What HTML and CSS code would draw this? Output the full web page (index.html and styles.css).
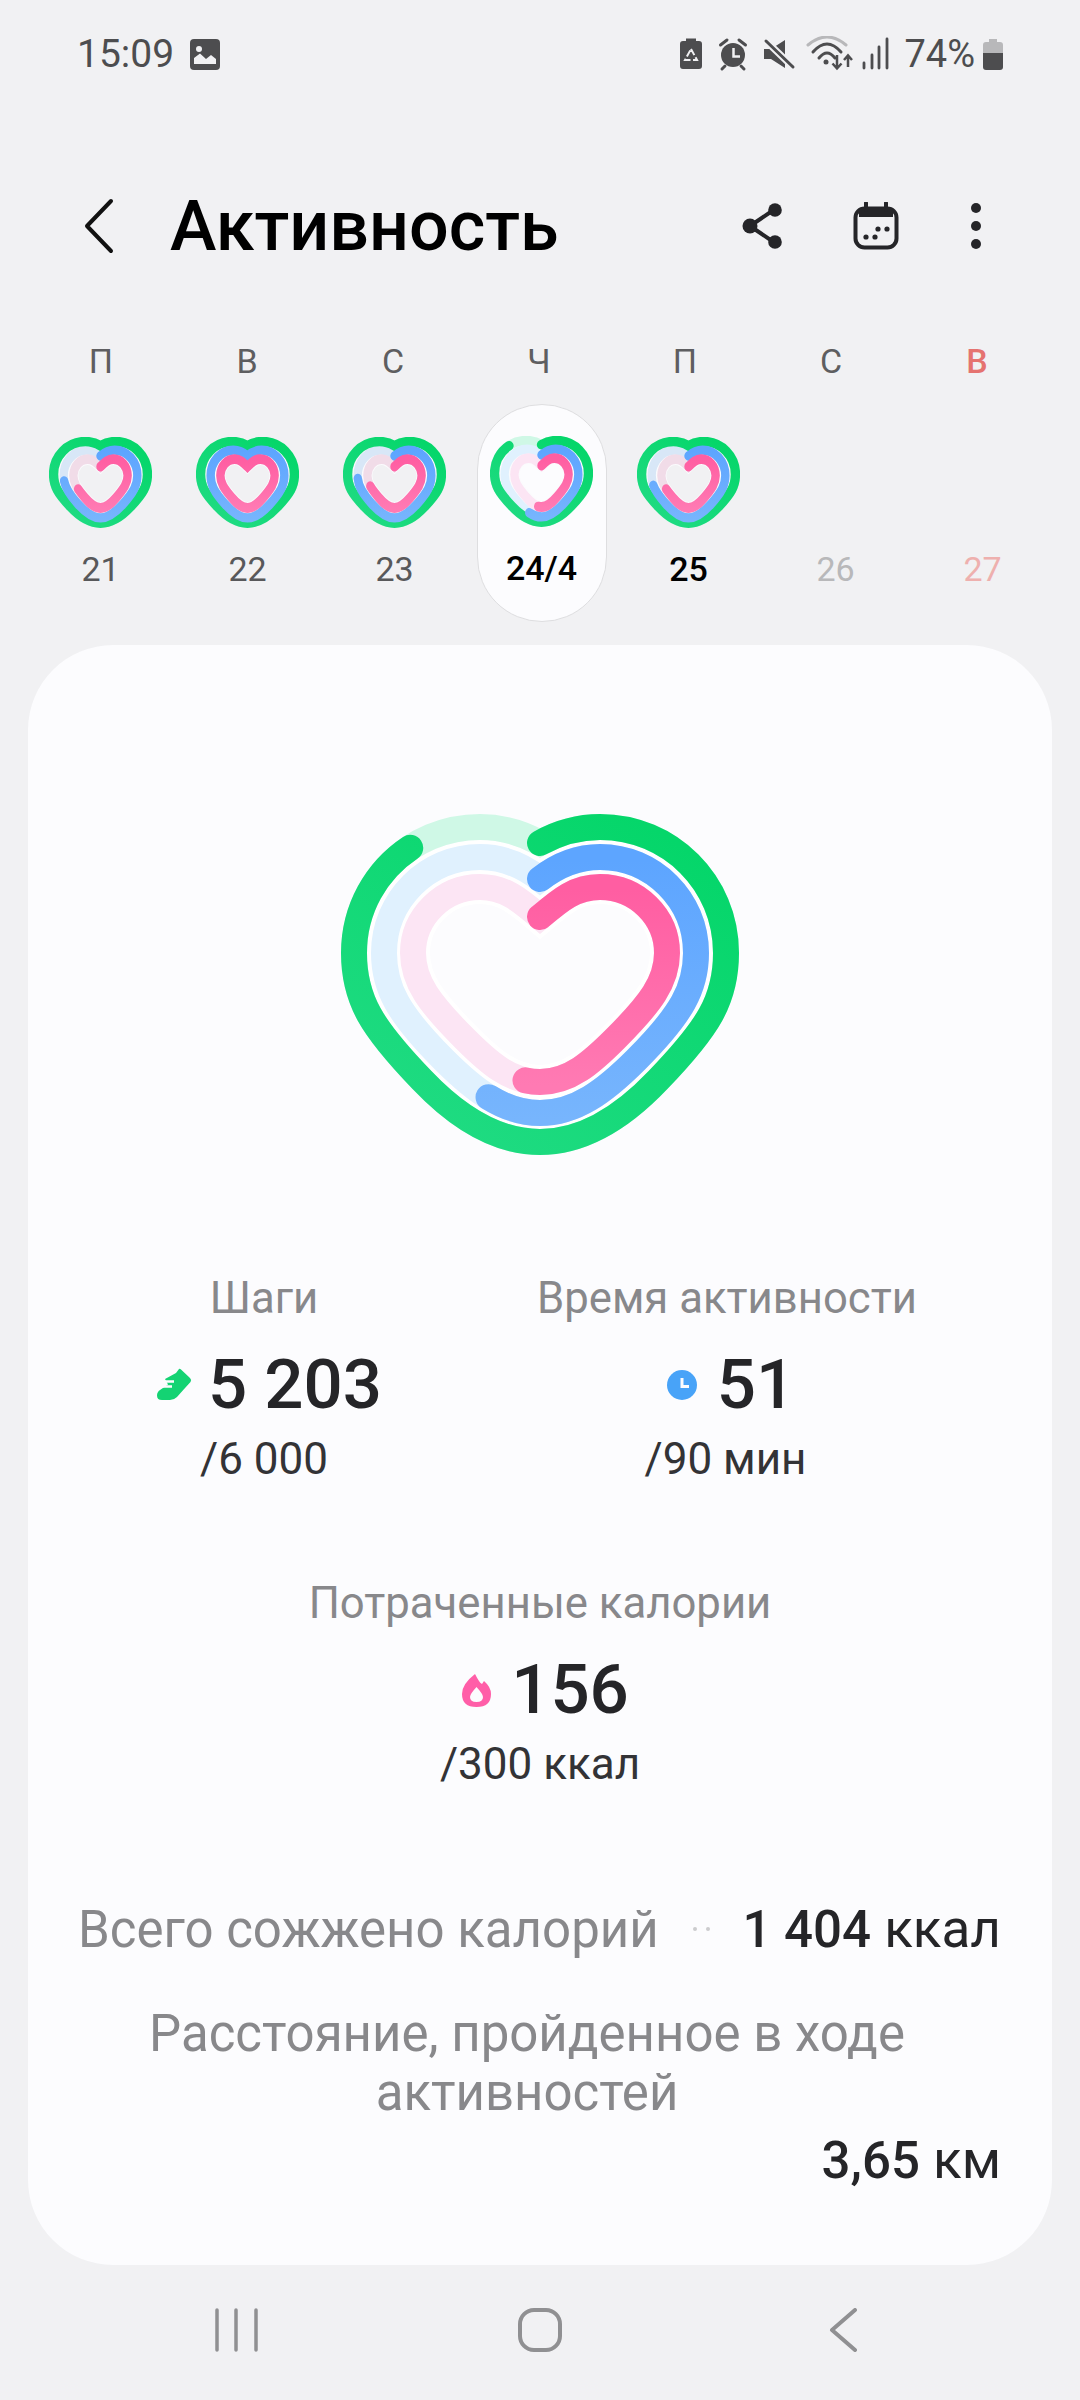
FILE: index.html
```html
<!DOCTYPE html>
<html lang="ru">
<head>
    <meta charset="UTF-8">
    <meta name="viewport" content="width=device-width, initial-scale=1.0">
    <title>Активность</title>
    <link rel="stylesheet" href="styles.css">
</head>
<body>
    <!-- Shared heart rings, reused by the week strip and the main card -->
    <svg class="svg-defs" aria-hidden="true">
        <defs>
            <linearGradient id="grad-green" gradientUnits="userSpaceOnUse" x1="100" y1="30" x2="-100" y2="350">
                <stop offset="0" stop-color="#05d66a"/>
                <stop offset="1" stop-color="#1fdb82"/>
            </linearGradient>
            <linearGradient id="grad-blue" gradientUnits="userSpaceOnUse" x1="0" y1="70" x2="0" y2="330">
                <stop offset="0" stop-color="#5da5ff"/>
                <stop offset="1" stop-color="#77b5fd"/>
            </linearGradient>
            <linearGradient id="grad-pink" gradientUnits="userSpaceOnUse" x1="0" y1="100" x2="0" y2="295">
                <stop offset="0" stop-color="#ff5ea2"/>
                <stop offset="1" stop-color="#ff7ab3"/>
            </linearGradient>
            <path id="ring-green" pathLength="100" d="M0 53C18 43 38 37 60 37C130 37 186 93 186 163C186 210 168 238 118 290C80 330 42 352 0 352C-42 352 -80 330 -118 290C-168 238 -186 210 -186 163C-186 93 -130 37 -60 37C-38 37 -18 43 0 53Z"/>
            <path id="ring-blue" pathLength="100" d="M0 89C18 75 38 67 60 67C113 67 156 110 156 163C156 198 142 224 96 270C65 301 36 323 0 323C-36 323 -65 301 -96 270C-142 224 -156 198 -156 163C-156 110 -113 67 -60 67C-38 67 -18 75 0 89Z"/>
            <path id="ring-pink" pathLength="100" d="M0 127C20 110 35 97 60 97C97 97 127 127 127 163C127 192 110 214 75 249C52 272 30 292 0 292C-30 292 -52 272 -75 249C-110 214 -127 192 -127 163C-127 127 -97 97 -60 97C-35 97 -20 110 0 127Z"/>
            <g id="heart-tracks">
                <use href="#ring-blue" class="blue casing"/>
                <use href="#ring-pink" class="pink casing"/>
                <use href="#ring-green" class="green track-green"/>
                <use href="#ring-blue" class="blue track-blue"/>
                <use href="#ring-pink" class="pink track-pink"/>
            </g>
        </defs>
    </svg>

    <div class="status-bar">
        <span class="status-time">15:09</span>
        <svg class="status-image" viewBox="190 39 30 31">
            <rect x="190" y="39" width="30" height="31" rx="4" fill="#4d4d4f"/>
            <circle cx="199" cy="49" r="3" fill="#f1f1f3"/>
            <path d="M194 64V58L200 53.500L206 59L211 55L216 59V64Z" fill="#f1f1f3"/>
        </svg>
        <div class="status-right">
            <svg class="status-icons" viewBox="680 36 209 36">
                <path d="M686 38.500H696V41H699Q702 41 702 44V66Q702 69 699 69H683Q680 69 680 66V44Q680 41 683 41H686Z" fill="#4d4d4f"/>
                <path d="M691 49L697 60H685Z" fill="none" stroke="#f1f1f3" stroke-width="2" stroke-dasharray="7 2.500"/>
                <circle cx="733" cy="55" r="12" fill="#4d4d4f"/>
                <path d="M733.500 48V56.500H740" fill="none" stroke="#f1f1f3" stroke-width="2.500"/>
                <path d="M720.500 45L727 40M745.500 45L739 40M725 66L722 69M741 66L744 69" fill="none" stroke="#4d4d4f" stroke-width="3" stroke-linecap="round"/>
                <path d="M764 49H771L785 40V68L771 59H764Z" fill="#4d4d4f"/>
                <path d="M766 41L793 67" fill="none" stroke="#f1f1f3" stroke-width="7"/>
                <path d="M766 41L793 67" fill="none" stroke="#4d4d4f" stroke-width="3" stroke-linecap="round"/>
                <path d="M808 45Q827 29 846 45" fill="none" stroke="#b8b8ba" stroke-width="3" stroke-linecap="round"/>
                <path d="M813 52Q827 36 841 52M819 58Q827 48 835 58" fill="none" stroke="#4d4d4f" stroke-width="3" stroke-linecap="round"/>
                <circle cx="826" cy="62" r="2.500" fill="#4d4d4f"/>
                <path d="M837 55V68M832.500 63.500L837 68.500L841.500 63.500M848 67V56M844 60L848 55.500L852 60" fill="none" stroke="#4d4d4f" stroke-width="2.500"/>
                <path d="M864 63V68M872 55V68M879 47V68M887 39V68" fill="none" stroke="#4d4d4f" stroke-width="2.800" stroke-linecap="round"/>
            </svg>
            <span class="status-battery">74%</span>
            <svg class="status-battery-icon" viewBox="0 0 20 31">
                <path d="M6 0H14V3H17Q20 3 20 6V14H0V6Q0 3 3 3H6Z" fill="#b8b8ba"/>
                <path d="M0 14H20V28Q20 31 17 31H3Q0 31 0 28Z" fill="#4d4d4f"/>
            </svg>
        </div>
    </div>

    <header class="app-header">
        <svg class="back-icon" viewBox="0 0 30 56">
            <path d="M27 3L3 28L27 53" fill="none" stroke="#111" stroke-width="4" stroke-linecap="round" stroke-linejoin="round"/>
        </svg>
        <h1 class="app-title">Активность</h1>
        <div class="app-actions">
            <svg class="share-icon" viewBox="0 0 40 46">
                <path d="M8 23L33 6M8 23L33 40" fill="none" stroke="#252528" stroke-width="4"/>
                <circle cx="8" cy="23" r="7.500" fill="#252528"/>
                <circle cx="33" cy="7" r="6.800" fill="#252528"/>
                <circle cx="33" cy="39" r="6.800" fill="#252528"/>
            </svg>
            <svg class="calendar-icon" viewBox="0 0 46 48">
                <rect x="2.500" y="6.500" width="41" height="39" rx="9" fill="none" stroke="#252528" stroke-width="4"/>
                <path d="M6 8H40V15H6Z" fill="#252528"/>
                <path d="M13 1V8M33 1V8" stroke="#252528" stroke-width="4" stroke-linecap="round"/>
                <circle cx="13" cy="35" r="2.600" fill="#252528"/>
                <circle cx="22" cy="35" r="2.600" fill="#252528"/>
                <circle cx="25" cy="27" r="2.600" fill="#252528"/>
                <circle cx="34" cy="27" r="2.600" fill="#252528"/>
            </svg>
            <svg class="more-icon" viewBox="0 0 12 48">
                <circle cx="6" cy="6" r="5" fill="#252528"/>
                <circle cx="6" cy="24" r="5" fill="#252528"/>
                <circle cx="6" cy="42" r="5" fill="#252528"/>
            </svg>
        </div>
    </header>

    <div class="week-letters">
        <span>П</span>
        <span>В</span>
        <span>С</span>
        <span>Ч</span>
        <span>П</span>
        <span>С</span>
        <span class="sunday">В</span>
    </div>

    <div class="week-days">
        <div class="day">
            <svg class="heart heart-small" viewBox="-200 24 400 342" preserveAspectRatio="none">
                <use href="#heart-tracks"/>
                <use href="#ring-green" class="green progress" stroke="url(#grad-green)"/>
                <use href="#ring-blue" class="blue progress" stroke="url(#grad-blue)" stroke-dasharray="74 100"/>
                <use href="#ring-pink" class="pink progress" stroke="url(#grad-pink)" stroke-dasharray="68 100"/>
            </svg>
            <span class="day-number">21</span>
        </div>
        <div class="day">
            <svg class="heart heart-small" viewBox="-200 24 400 342" preserveAspectRatio="none">
                <use href="#heart-tracks"/>
                <use href="#ring-green" class="green progress" stroke="url(#grad-green)"/>
                <use href="#ring-blue" class="blue progress" stroke="url(#grad-blue)"/>
                <use href="#ring-pink" class="pink progress" stroke="url(#grad-pink)"/>
            </svg>
            <span class="day-number">22</span>
        </div>
        <div class="day">
            <svg class="heart heart-small" viewBox="-200 24 400 342" preserveAspectRatio="none">
                <use href="#heart-tracks"/>
                <use href="#ring-green" class="green progress" stroke="url(#grad-green)"/>
                <use href="#ring-blue" class="blue progress" stroke="url(#grad-blue)" stroke-dasharray="75 100"/>
                <use href="#ring-pink" class="pink progress" stroke="url(#grad-pink)" stroke-dasharray="70 100"/>
            </svg>
            <span class="day-number">23</span>
        </div>
        <div class="day day-selected">
            <svg class="heart heart-small" viewBox="-200 24 400 342" preserveAspectRatio="none">
                <use href="#heart-tracks"/>
                <use href="#ring-green" class="green progress" stroke="url(#grad-green)" stroke-dasharray="87.500 100"/>
                <use href="#ring-blue" class="blue progress" stroke="url(#grad-blue)" stroke-dasharray="56 100"/>
                <use href="#ring-pink" class="pink progress" stroke="url(#grad-pink)" stroke-dasharray="52 100"/>
            </svg>
            <span class="day-number day-strong">24/4</span>
        </div>
        <div class="day">
            <svg class="heart heart-small" viewBox="-200 24 400 342" preserveAspectRatio="none">
                <use href="#heart-tracks"/>
                <use href="#ring-green" class="green progress" stroke="url(#grad-green)"/>
                <use href="#ring-blue" class="blue progress" stroke="url(#grad-blue)" stroke-dasharray="72 100"/>
                <use href="#ring-pink" class="pink progress" stroke="url(#grad-pink)" stroke-dasharray="68 100"/>
            </svg>
            <span class="day-number day-strong">25</span>
        </div>
        <div class="day">
            <span class="day-number day-future">26</span>
        </div>
        <div class="day">
            <span class="day-number day-future-sunday">27</span>
        </div>
    </div>

    <main class="card">
        <svg class="heart heart-big" viewBox="-200 24 400 342">
            <use href="#heart-tracks"/>
            <use href="#ring-green" class="green progress" stroke="url(#grad-green)" stroke-dasharray="87.500 100"/>
            <use href="#ring-blue" class="blue progress" stroke="url(#grad-blue)" stroke-dasharray="56 100"/>
            <use href="#ring-pink" class="pink progress" stroke="url(#grad-pink)" stroke-dasharray="52 100"/>
        </svg>

        <div class="stat-row">
            <div class="stat stat-steps">
                <div class="stat-label">Шаги</div>
                <div class="stat-value">
                    <svg class="shoe-icon" viewBox="0 0 36 34">
                        <path d="M22 1Q23 .5 24 1.500L33 10Q35 12 33.500 14Q27 21 20 29Q17 32 13 32H5Q0 32 0 27.500Q0 24 3 22L11 16.500L8 11L19 5Z" fill="#14d373"/>
                        <path d="M7 13.500H17M6 18.500H15" fill="none" stroke="#fcfcfe" stroke-width="2.500"/>
                    </svg>
                    <span>5 203</span>
                </div>
                <div class="stat-goal">/6 000</div>
            </div>
            <div class="stat stat-time">
                <div class="stat-label">Время активности</div>
                <div class="stat-value">
                    <svg class="clock-icon" viewBox="0 0 30 30">
                        <circle cx="15" cy="15" r="15" fill="#48a3f8"/>
                        <path d="M15 8V16.500H22" fill="none" stroke="#fcfcfe" stroke-width="3"/>
                    </svg>
                    <span>51</span>
                </div>
                <div class="stat-goal">/90 мин</div>
            </div>
        </div>

        <div class="stat stat-calories">
            <div class="stat-label">Потраченные калории</div>
            <div class="stat-value">
                <svg class="flame-icon" viewBox="0 0 29 33">
                    <path fill-rule="evenodd" d="M13 0Q15 4 17 7Q18 9 20 10L22 7Q29 13 29 20Q29 33 14.500 33Q0 33 0 20Q0 10 13 0ZM14.500 13Q8 20 8 23Q8 28 14.500 28Q21 28 21 23Q21 20 14.500 13Z" fill="#ff5ea8"/>
                </svg>
                <span>156</span>
            </div>
            <div class="stat-goal">/300 ккал</div>
        </div>

        <div class="summary-row">
            <span class="summary-label">Всего сожжено калорий</span>
            <span class="summary-dots"><i></i><i></i></span>
            <span class="summary-value"><b>1 404</b> ккал</span>
        </div>
        <div class="distance-label">Расстояние, пройденное в ходе активностей</div>
        <div class="distance-value"><span class="summary-value"><b>3,65</b> км</span></div>
    </main>

    <nav class="nav-bar">
        <svg class="nav-recent" viewBox="0 0 48 44">
            <path d="M5 2V42M24 2V42M44 2V42" fill="none" stroke="#909092" stroke-width="3.500" stroke-linecap="round"/>
        </svg>
        <svg class="nav-home" viewBox="0 0 44 44">
            <rect x="2" y="2" width="40" height="40" rx="14" fill="none" stroke="#909092" stroke-width="4"/>
        </svg>
        <svg class="nav-back" viewBox="0 0 44 44">
            <path d="M35 2L12 22L35 42" fill="none" stroke="#909092" stroke-width="4" stroke-linecap="round" stroke-linejoin="round"/>
        </svg>
    </nav>
</body>
</html>
```

FILE: styles.css
```css
/* General styles */
* {
    box-sizing: border-box;
}

body {
    font-family: Roboto, "Noto Sans", sans-serif;
    width: 1080px;
    height: 2400px;
    margin: 0;
    overflow: hidden;
    background-color: #f1f1f3;
}

svg {
    display: block;
    flex: none;
}

.svg-defs {
    width: 0;
    height: 0;
}

/* Status bar */
.status-bar {
    display: flex;
    align-items: center;
    height: 70px;
    margin-top: 19px;
    padding: 0 77px 0 77px;
    color: #4d4d4f;
}

.status-time {
    font-size: 39px;
    line-height: 36px;
}

.status-image {
    width: 30px;
    height: 31px;
    margin-left: 16px;
}

.status-right {
    display: flex;
    align-items: center;
    margin-left: auto;
}

.status-icons {
    width: 209px;
    height: 36px;
}

.status-battery {
    margin-left: 15px;
    font-size: 38px;
    line-height: 36px;
}

.status-battery-icon {
    width: 20px;
    height: 31px;
    margin-left: 8px;
}

/* Header */
.app-header {
    display: flex;
    align-items: center;
    height: 96px;
    margin-top: 89px;
    padding: 0 98px 0 84px;
}

.back-icon {
    width: 30px;
    height: 56px;
}

.app-title {
    margin: 0 0 0 56px;
    font-size: 70px;
    font-weight: 500;
    color: #000;
}

.app-actions {
    display: flex;
    align-items: center;
    gap: 71px;
    margin-left: auto;
}

.share-icon {
    width: 40px;
    height: 46px;
}

.calendar-icon {
    width: 46px;
    height: 48px;
}

.more-icon {
    width: 12px;
    height: 48px;
}

/* Week strip */
.week-letters {
    display: grid;
    grid-template-columns: repeat(7, 146px);
    height: 50px;
    margin-top: 62px;
    padding-left: 28px;
    font-size: 34px;
    line-height: 50px;
    text-align: center;
    color: #5e5e60;
}

.week-letters .sunday {
    font-weight: 500;
    color: #e57370;
}

.week-days {
    display: grid;
    grid-template-columns: repeat(7, 147px);
    height: 218px;
    margin-top: 18px;
    padding-left: 27px;
}

/* The small hearts have thicker bands packed closer to the middle */
.day {
    display: flex;
    flex-direction: column;
    align-items: center;
    justify-content: flex-end;
    gap: 20px;
    padding-bottom: 33px;
    --green-shape: translate(0, 5.4px) scale(.98, .962);
    --blue-shape: translate(0, 7px) scale(.917, .984);
    --pink-shape: translate(0, 15.5px) scale(.83, .933);
    --band-green: 37px;
    --band-blue: 35.500px;
    --band-pink: 39px;
    --casing-blue: 44px;
    --casing-pink: 47px;
    --casing-color: #fbfbfd;
    --track-green: #d0f5e2;
    --track-blue: #d8e7f7;
    --track-pink: #f1dce8;
}

.day-selected {
    width: 130px;
    justify-self: center;
    border: 1px solid #dedee0;
    border-radius: 65px;
    background-color: #fcfcfe;
    --track-green: #cff8e6;
    --track-blue: #e0f1fe;
    --track-pink: #fce5f4;
}

.day-number {
    font-size: 34px;
    line-height: 40px;
    color: #58585a;
}

.day-strong {
    font-weight: 500;
    color: #000;
}

.day-future {
    color: #b8b8ba;
}

.day-future-sunday {
    color: #eeb0ae;
}

/* Heart rings */
.heart {
    fill: none;
    stroke-linecap: round;
}

.heart-small {
    width: 103px;
    height: 92px;
}

.heart-big {
    width: 400px;
    height: 342px;
    margin: 0 auto;
    --band-green: 26px;
    --band-blue: 26px;
    --band-pink: 26px;
    --casing-blue: 34px;
    --casing-pink: 34px;
    --casing-color: #fff;
    --track-green: #cff8e6;
    --track-blue: #e0f1fe;
    --track-pink: #fce5f4;
}

.green {
    stroke-width: var(--band-green);
    transform: var(--green-shape, none);
}

.blue {
    stroke-width: var(--band-blue);
    transform: var(--blue-shape, none);
}

.pink {
    stroke-width: var(--band-pink);
    transform: var(--pink-shape, none);
}

.blue.casing {
    stroke: var(--casing-color);
    stroke-width: var(--casing-blue);
}

.pink.casing {
    stroke: var(--casing-color);
    stroke-width: var(--casing-pink);
}

.track-green {
    stroke: var(--track-green);
}

.track-blue {
    stroke: var(--track-blue);
}

.track-pink {
    stroke: var(--track-pink);
}

/* Main card */
.card {
    height: 1620px;
    margin: 23px 28px 0;
    padding-top: 169px;
    border-radius: 85px;
    background-color: #fcfcfe;
}

.stat-row {
    display: flex;
    gap: 148px;
    margin-top: 117px;
    padding-left: 111px;
}

.stat {
    text-align: center;
}

.stat-steps {
    width: 250px;
}

.stat-time {
    width: 377px;
}

.stat-calories {
    margin-top: 94px;
}

.stat-label {
    font-size: 43.700px;
    line-height: 50px;
    white-space: nowrap;
    color: #88888b;
}

.stat-value {
    display: flex;
    align-items: center;
    justify-content: center;
    gap: 20px;
    height: 80px;
    margin-top: 22px;
    padding-left: 11px;
    font-size: 69px;
    font-weight: 500;
    line-height: 80px;
    color: #252528;
}

.shoe-icon {
    width: 36px;
    height: 34px;
    margin-right: -5px;
}

.clock-icon {
    width: 30px;
    height: 30px;
}

.flame-icon {
    width: 29px;
    height: 33px;
}

.stat-goal {
    margin-top: 9px;
    font-size: 44px;
    line-height: 50px;
    color: #333336;
}

/* Totals */
.summary-row {
    display: flex;
    align-items: center;
    height: 60px;
    margin-top: 110px;
    padding: 0 51px 0 50px;
}

.summary-label {
    font-size: 51px;
    white-space: nowrap;
    color: #88888b;
}

.summary-dots {
    display: flex;
    gap: 9px;
    margin-left: 34px;
}

.summary-dots i {
    width: 4px;
    height: 4px;
    border-radius: 50%;
    background-color: #ccccce;
}

.summary-value {
    margin-left: auto;
    font-size: 53px;
    white-space: nowrap;
    color: #252528;
}

.summary-value b {
    font-size: 51px;
    font-weight: 500;
}

.distance-label {
    margin-top: 45px;
    padding: 0 79px 0 53px;
    font-size: 51px;
    line-height: 59px;
    text-align: center;
    color: #88888b;
}

.distance-value {
    display: flex;
    height: 60px;
    margin-top: 8px;
    padding: 0 51px 0 53px;
    line-height: 60px;
}

/* Navigation bar */
.nav-bar {
    display: flex;
    gap: 258px;
    height: 44px;
    margin-top: 43px;
    padding-left: 212px;
}

.nav-recent {
    width: 48px;
    height: 44px;
}

.nav-home,
.nav-back {
    width: 44px;
    height: 44px;
}
```
